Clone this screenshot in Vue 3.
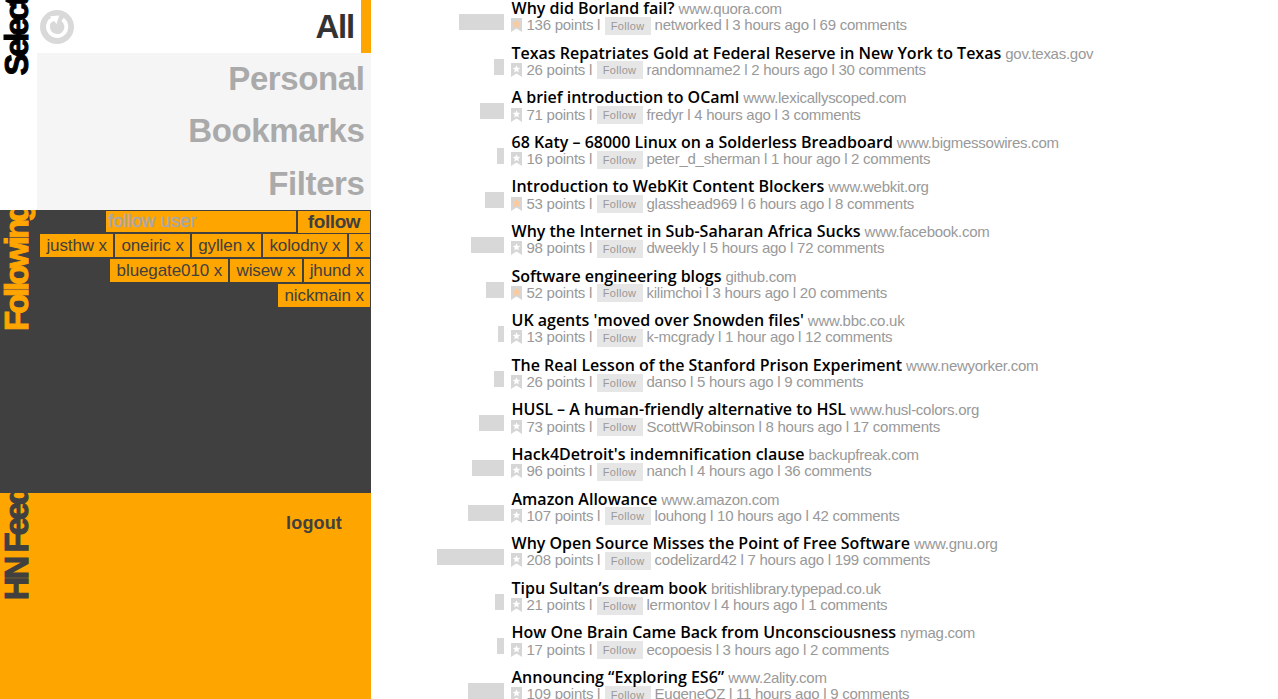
<script setup>
const filters = ['Personal', 'Bookmarks', 'Filters']
const following = [
  ['justhw', 'oneiric', 'gyllen', 'kolodny', ''],
  ['bluegate010', 'wisew', 'jhund'],
  ['nickmain'],
]
const stories = [
  ['Why did Borland fail?', 'www.quora.com', 136, 'networked', '3 hours ago', 69, true],
  ['Texas Repatriates Gold at Federal Reserve in New York to Texas', 'gov.texas.gov', 26, 'randomname2', '2 hours ago', 30],
  ['A brief introduction to OCaml', 'www.lexicallyscoped.com', 71, 'fredyr', '4 hours ago', 3],
  ['68 Katy – 68000 Linux on a Solderless Breadboard', 'www.bigmessowires.com', 16, 'peter_d_sherman', '1 hour ago', 2],
  ['Introduction to WebKit Content Blockers', 'www.webkit.org', 53, 'glasshead969', '6 hours ago', 8, true],
  ['Why the Internet in Sub-Saharan Africa Sucks', 'www.facebook.com', 98, 'dweekly', '5 hours ago', 72],
  ['Software engineering blogs', 'github.com', 52, 'kilimchoi', '3 hours ago', 20, true],
  ["UK agents 'moved over Snowden files'", 'www.bbc.co.uk', 13, 'k-mcgrady', '1 hour ago', 12],
  ['The Real Lesson of the Stanford Prison Experiment', 'www.newyorker.com', 26, 'danso', '5 hours ago', 9],
  ['HUSL – A human-friendly alternative to HSL', 'www.husl-colors.org', 73, 'ScottWRobinson', '8 hours ago', 17],
  ["Hack4Detroit's indemnification clause", 'backupfreak.com', 96, 'nanch', '4 hours ago', 36],
  ['Amazon Allowance', 'www.amazon.com', 107, 'louhong', '10 hours ago', 42],
  ['Why Open Source Misses the Point of Free Software', 'www.gnu.org', 208, 'codelizard42', '7 hours ago', 199],
  ['Tipu Sultan’s dream book', 'britishlibrary.typepad.co.uk', 21, 'lermontov', '4 hours ago', 1],
  ['How One Brain Came Back from Unconsciousness', 'nymag.com', 17, 'ecopoesis', '3 hours ago', 2],
  ['Announcing “Exploring ES6”', 'www.2ality.com', 109, 'EugeneOZ', '11 hours ago', 9],
].map(([title, site, points, user, age, comments, marked]) => ({ title, site, points, user, age, comments, marked }))
const barWidth = (points) => Math.round(points * 0.313 + 2.1)
</script>

<template>
  <div class="page">
    <aside class="sidebar">
      <section class="panel select">
        <h2 class="label"><span>Select</span></h2>
        <nav class="menu">
          <div class="item active">
            <svg class="refresh" viewBox="0 0 34 34">
              <circle cx="17" cy="17" r="17" fill="#d9d9d9" />
              <path d="M22.6 9.4A9.2 9.2 0 1 1 12.6 8.8" fill="none" stroke="#fff" stroke-width="3.8" />
              <path d="M9.8 6.2L19.2 5.4L16.4 14.2L14.6 11.2L11.6 11.6L12.2 8.2Z" fill="#fff" />
            </svg>
            <span>All</span>
          </div>
          <div v-for="f in filters" :key="f" class="item">{{ f }}</div>
        </nav>
      </section>
      <section class="panel following">
        <h2 class="label"><span>Following</span></h2>
        <div class="users">
          <div class="add">
            <input class="field" placeholder="follow user" />
            <button class="submit">follow</button>
          </div>
          <div v-for="(row, i) in following" :key="i" class="tags">
            <span v-for="u in row" :key="u" class="tag">{{ u ? u + ' x' : 'x' }}</span>
          </div>
        </div>
      </section>
      <section class="panel feed">
        <h2 class="label"><span>HN Feed</span></h2>
        <a class="logout">logout</a>
      </section>
    </aside>
    <main class="stories">
      <article v-for="s in stories" :key="s.title" class="story">
        <div class="gauge"><div class="bar" :style="{ width: barWidth(s.points) + 'px' }"></div></div>
        <div class="body">
          <div class="headline"><span class="title">{{ s.title }}</span><span class="site">{{ s.site }}</span></div>
          <div class="meta">
            <svg class="mark" viewBox="0 0 11 14">
              <path d="M0 0H11V14L5.5 10.5L0 14Z" fill="#d6d6d6" />
              <path d="M5.5 2.2L6.6 4.8L9.3 5L7.2 6.8L7.9 9.6L5.5 8.1L3.1 9.6L3.8 6.8L1.7 5L4.4 4.8Z" :fill="s.marked ? '#ffc999' : '#fff'" :stroke="s.marked ? '#ffc999' : 'none'" stroke-width="0.6" />
            </svg>
            <span class="points">{{ s.points }} points l</span>
            <button class="follow">Follow</button>
            <span>{{ s.user }} l {{ s.age }} l {{ s.comments }} comments</span>
          </div>
        </div>
      </article>
    </main>
  </div>
</template>

<style>
body { margin: 0; background: #fff; overflow: hidden; }
</style>

<style scoped>
.page { display: flex; width: 1278px; height: 699px; overflow: hidden; font-family: "Liberation Sans", Arial, sans-serif; }
.sidebar { width: 371px; flex: none; display: flex; flex-direction: column; }
.panel { display: flex; overflow: hidden; }
.select { height: 210px; }
.following { height: 283px; background: #404040; color: #ffa500; }
.feed { flex: 1; background: #ffa500; color: #404040; }
.label { margin: 0; width: 37px; flex: none; overflow: hidden; display: flex; align-items: flex-end; align-self: flex-start; font-size: 33px; font-weight: bold; line-height: 34px; letter-spacing: -3.1px; -webkit-text-stroke: 1px currentColor; }
.label span { writing-mode: vertical-rl; transform: rotate(180deg); white-space: nowrap; }
.select .label { height: 75px; letter-spacing: -3.3px; }
.following .label { height: 121px; }
.feed .label { height: 107px; }
.menu { width: 334px; background: #f5f5f5; color: #aaa; }
.item { box-sizing: border-box; height: 52.4px; padding-right: 6.5px; text-align: right; font-size: 33px; letter-spacing: -0.4px; font-weight: bold; line-height: 52px; }
.active { display: flex; justify-content: space-between; align-items: center; height: 53px; padding: 0 7px 0 3px; background: #fff; color: #333; border-right: 10px solid #ffa500; }
.active span { letter-spacing: -1.2px; }
.refresh { width: 34px; height: 34px; }
.users { width: 333px; padding: 1px 1px 0 0; color: #404040; }
.add { display: flex; justify-content: flex-end; gap: 2px; height: 22px; }
.field { box-sizing: border-box; width: 190px; height: 21px; border: 0; padding: 0 2px; background: #ffa500; font: 18px/21px "Liberation Sans", Arial, sans-serif; letter-spacing: 0.25px; }
.field::placeholder { color: #a9a9a9; opacity: 1; -webkit-text-stroke: 0.5px #a9a9a9; }
.submit { width: 72px; height: 22px; border: 0; padding: 0; background: #ffa500; color: #404040; font: bold 19px/22px "Liberation Sans", Arial, sans-serif; letter-spacing: -0.4px; }
.tags { display: flex; justify-content: flex-end; gap: 2px; height: 23px; margin: 1px 0 2px; }
.tags + .tags { margin-top: 2px; }
.tag { box-sizing: border-box; min-width: 21.5px; padding: 0 6.2px; background: #ffa500; font-size: 17px; line-height: 23px; letter-spacing: -0.1px; }
.logout { margin: 18px 29px 0 auto; font-size: 18px; font-weight: bold; line-height: 24px; letter-spacing: 0.15px; }
.stories { flex: 1; margin-top: -2px; }
.story { display: flex; height: 44.6px; }
.gauge { width: 133px; margin-right: 7.5px; display: flex; justify-content: flex-end; padding-top: 16px; }
.bar { height: 16px; background: #d8d8d8; }
.body { white-space: nowrap; }
.headline { position: relative; z-index: 1; display: flex; align-items: baseline; height: 20px; line-height: 20px; }
.title { font-family: "Open Sans", sans-serif; font-size: 16px; font-weight: 600; color: #000; }
.site { margin-left: 4px; font-size: 15px; letter-spacing: -0.27px; color: #999; }
.meta { display: flex; align-items: center; height: 16px; margin-top: -0.7px; font-size: 15px; line-height: 16px; letter-spacing: -0.26px; color: #999; }
.mark { width: 11px; height: 14px; margin: 0 4.5px 0 -0.5px; }
.follow { width: 46px; height: 18px; margin: 1px 4px 0 4.5px; border: 0; padding: 0; background: #e6e6e6; color: #999; font: 11px/18px "Liberation Sans", Arial, sans-serif; letter-spacing: 0.3px; }
</style>
